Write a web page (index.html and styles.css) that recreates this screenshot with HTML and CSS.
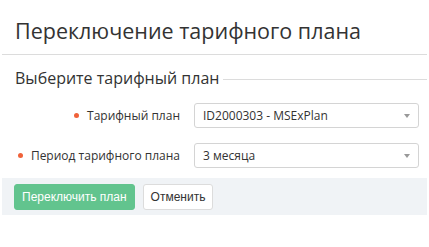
FILE: index.html
```html
<!DOCTYPE html>
<html lang="ru">
<head>
    <meta charset="UTF-8">
    <meta name="viewport" content="width=device-width, initial-scale=1.0">
    <title>Переключение тарифного плана</title>
    <link rel="stylesheet" href="styles.css">
</head>
<body>
    <div class="modal">
        <div class="modal-header">
            <h1>Переключение тарифного плана</h1>
        </div>

        <div class="section">
            <div class="legend">
                <span>Выберите тарифный план</span>
                <div class="legend-line"></div>
            </div>

            <div class="form-row">
                <label class="required">Тарифный план</label>
                <div class="select">
                    <span>ID2000303 - MSExPlan</span>
                    <span class="caret"></span>
                </div>
            </div>

            <div class="form-row">
                <label class="required">Период тарифного плана</label>
                <div class="select">
                    <span>3 месяца</span>
                    <span class="caret"></span>
                </div>
            </div>
        </div>

        <div class="modal-footer">
            <button class="btn btn-primary">Переключить план</button>
            <button class="btn btn-default">Отменить</button>
        </div>
    </div>
</body>
</html>
```

FILE: styles.css
```css
body {
    margin: 0;
    padding: 0;
    background-color: #ffffff;
    font-family: "Open Sans", Arial, sans-serif;
    color: #333;
}

.modal {
    width: 425px;
    padding: 0 2px;
}

.modal-header {
    padding: 17px 13px 9px;
    border-bottom: 1px solid #dcdcdc;
}

.modal-header h1 {
    margin: 0;
    font-size: 21.5px;
    font-weight: 400;
    line-height: 28px;
    color: #333;
}

.section {
    padding: 0 0 0 13px;
}

.legend {
    display: flex;
    align-items: center;
    height: 24px;
    margin-top: 11px;
    font-size: 16px;
    color: #333;
}

.legend-line {
    flex: 1;
    height: 1px;
    margin-left: 4px;
    margin-top: 3px;
    background-color: #dcdcdc;
}

.form-row {
    display: flex;
    align-items: center;
    margin-top: 13px;
}

.form-row + .form-row {
    margin-top: 15px;
}

.form-row label {
    flex: none;
    width: 165px;
    padding-right: 14px;
    text-align: right;
    white-space: nowrap;
    font-size: 12px;
    color: #333;
}

.required::before {
    content: "";
    display: inline-block;
    width: 5px;
    height: 5px;
    margin-right: 8px;
    border-radius: 50%;
    background-color: #f0623a;
    vertical-align: 2px;
}

.select {
    display: flex;
    align-items: center;
    justify-content: space-between;
    box-sizing: border-box;
    width: 225px;
    height: 25px;
    padding: 0 8px 0 8px;
    border: 1px solid #d4d4d4;
    border-radius: 3px;
    font-size: 12px;
    color: #333;
}

.caret {
    width: 0;
    height: 0;
    border-left: 3px solid transparent;
    border-right: 3px solid transparent;
    border-top: 4px solid #999;
}

.modal-footer {
    display: flex;
    gap: 8px;
    margin-top: 10px;
    padding: 6px 12px 5px;
    background-color: #f0f3f6;
}

.btn {
    height: 26px;
    padding: 0 7px;
    border-radius: 3px;
    font-family: "Liberation Sans", Arial, sans-serif;
    font-size: 12px;
    cursor: pointer;
}

.btn-primary {
    background-color: #62c48e;
    border: 1px solid #62c48e;
    color: #fff;
}

.btn-default {
    background-color: #fff;
    border: 1px solid #dcdcdc;
    color: #333;
}
```
